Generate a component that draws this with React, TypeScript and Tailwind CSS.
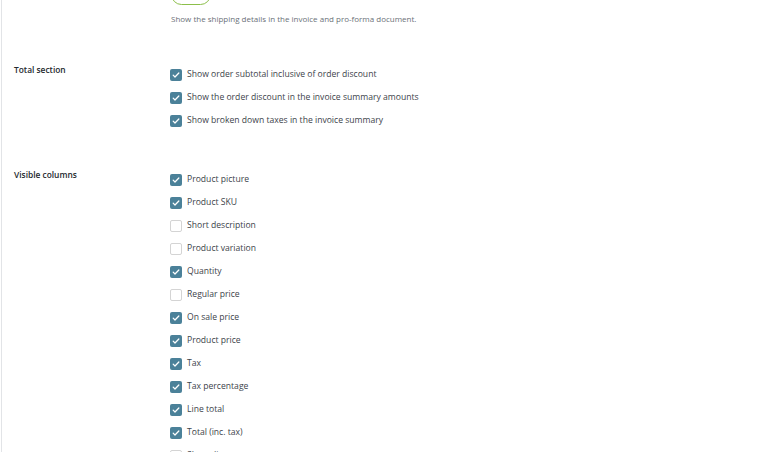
import type { ReactNode } from "react";

const font = { fontFamily: '"Open Sans", "Noto Sans", sans-serif' };

function Checkbox({ checked, label }: { checked: boolean; label: string }) {
  return (
    <label className="flex items-center h-[23px] gap-[5px]">
      {checked ? (
        <span className="w-[12px] h-[12px] rounded-[2px] bg-[#4b8199] flex items-center justify-center">
          <svg viewBox="0 0 12 12" className="w-[10px] h-[10px]" fill="none">
            <path d="M2.6 6.2l2.2 2.2 4.6-4.8" stroke="white" strokeWidth={1.5} strokeLinecap="round" strokeLinejoin="round" />
          </svg>
        </span>
      ) : (
        <span className="w-[12px] h-[12px] rounded-[2px] border border-[#d4d4d4] bg-white" />
      )}
      <span className="text-[8.6px] text-[#3c434a] leading-none">{label}</span>
    </label>
  );
}

function Row({ label, children, className }: { label: string; children: ReactNode; className?: string }) {
  return (
    <div className={"flex " + (className || "")}>
      <div className="w-[168px] pl-[12px] text-[8.4px] font-semibold text-[#23282d] leading-none">{label}</div>
      <div className="flex-1">{children}</div>
    </div>
  );
}

const columns: [string, boolean][] = [
  ["Product picture", true],
  ["Product SKU", true],
  ["Short description", false],
  ["Product variation", false],
  ["Quantity", true],
  ["Regular price", false],
  ["On sale price", true],
  ["Product price", true],
  ["Tax", true],
  ["Tax percentage", true],
  ["Line total", true],
  ["Total (inc. tax)", true],
  ["Show discount percentage", false],
];

export default function App() {
  return (
    <div className="h-[452px] overflow-hidden bg-white" style={font}>
      <div className="ml-[1px] h-full flex flex-col border-l border-[#e2e4e7] bg-white">
        <div className="-mt-[16px] flex">
          <div className="w-[168px] pl-[12px] pt-[6px] text-[8.4px] font-semibold text-[#23282d] leading-none">Show shipping address</div>
          <div className="flex-1 pl-[1px]">
            <div className="w-[40px] h-[21px] rounded-full border-[1.5px] border-[#8cbf4a] flex items-center justify-between pl-[6px] pr-[3px]">
              <span className="text-[8px] text-[#b5d58c] leading-none">Yes</span>
              <span className="w-[11px] h-[11px] rounded-full bg-[#7fb83f]" />
            </div>
            <p className="mt-[10px] text-[8px] text-[#6b7178] leading-none">
              Show the shipping details in the invoice and pro-forma document.
            </p>
          </div>
        </div>

        <Row label="Total section" className="mt-[43px]">
          <div className="-mt-[3px]">
            <Checkbox checked label="Show order subtotal inclusive of order discount" />
            <Checkbox checked label="Show the order discount in the invoice summary amounts" />
            <Checkbox checked label="Show broken down taxes in the invoice summary" />
          </div>
        </Row>

        <Row label="Visible columns" className="mt-[39px]">
          <div className="-mt-[3px]">
            {columns.map(([label, checked]) => (
              <Checkbox key={label} checked={checked} label={label} />
            ))}
          </div>
        </Row>
      </div>
    </div>
  );
}
